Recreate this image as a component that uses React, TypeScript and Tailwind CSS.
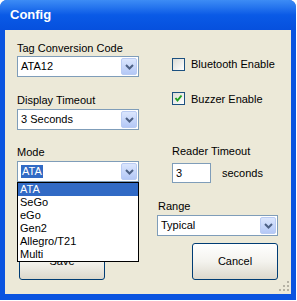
import React from "react";

const font = { fontFamily: '"Liberation Sans", Arial, sans-serif' };

function DropButton() {
  return (
    <div className="flex h-full w-[16px] items-center justify-center rounded-[2px] border border-[#b9cbf3] bg-gradient-to-b from-[#dbe6fd] to-[#b4c8f6]">
      <svg width="9" height="6" viewBox="0 0 9 6">
        <polyline points="1,1 4.5,4.5 8,1" fill="none" stroke="#4d6185" strokeWidth="2" />
      </svg>
    </div>
  );
}

function Combo({ value, selected }: { value: string; selected?: boolean }) {
  return (
    <div className="flex h-[21px] w-full items-stretch border border-[#7f9db9] bg-white p-[1px]">
      <div className="flex flex-1 items-center pl-[2px]">
        <span className={selected ? "bg-[#316ac5] px-[1px] leading-[13px] text-white" : "leading-[13px]"}>{value}</span>
      </div>
      <DropButton />
    </div>
  );
}

function Check({ checked, label }: { checked?: boolean; label: string }) {
  return (
    <div className="flex items-center gap-[6px]">
      <div className="flex h-[13px] w-[13px] items-center justify-center border border-[#1c5180] bg-gradient-to-br from-[#dcdcd6] to-white">
        {checked && (
          <svg width="9" height="9" viewBox="0 0 9 9">
            <polyline points="1.5,4 3.5,6.5 7.5,1.5" fill="none" stroke="#21a121" strokeWidth="2" />
          </svg>
        )}
      </div>
      <span>{label}</span>
    </div>
  );
}

function Button({ label }: { label: string }) {
  return (
    <div className="flex h-[37px] w-[86px] items-center justify-center rounded-[3px] border border-[#003c74] bg-gradient-to-b from-white via-[#f4f3ee] to-[#dcd8cc]">
      {label}
    </div>
  );
}

export default function App() {
  const modes = ["ATA", "SeGo", "eGo", "Gen2", "Allegro/T21", "Multi"];
  return (
    <div className="h-[301px] w-[297px] bg-white" style={font}>
      <div className="flex h-[300px] w-[296px] flex-col overflow-hidden rounded-t-[7px] bg-[#0a54e0]">
        <div className="flex h-[30px] items-center bg-gradient-to-b from-[#3d8cf5] via-[#0a5ae6] to-[#0650de] pl-[10px]">
          <span className="text-[13px] font-bold text-white">Config</span>
        </div>
        <div className="mx-[5px] mb-[6px] flex flex-1 bg-[#ece9d8] text-[11px] text-black">
          <div className="relative ml-[12px] flex w-[122px] flex-col">
            <div className="mt-[12px] leading-[13px]">Tag Conversion Code</div>
            <div className="mt-[1px]">
              <Combo value="ATA12" />
            </div>
            <div className="mt-[17px] leading-[13px]">Display Timeout</div>
            <div className="mt-[2px]">
              <Combo value="3 Seconds" />
            </div>
            <div className="mt-[16px] leading-[13px]">Mode</div>
            <div className="mt-[2px]">
              <Combo value="ATA" selected />
            </div>
            <div className="ml-[2px] mt-[61px]">
              <Button label="Save" />
            </div>
            <div className="absolute left-0 top-[152px] w-[122px] border border-black bg-white">
              {modes.map((m, i) => (
                <div
                  key={m}
                  className={i === 0 ? "h-[13px] bg-[#316ac5] pl-[2px] leading-[13px] text-white" : "h-[13px] pl-[2px] leading-[13px]"}
                >
                  {m}
                </div>
              ))}
            </div>
          </div>
          <div className="ml-[18px] flex w-[121px] flex-col">
            <div className="ml-[15px] mt-[26px]">
              <Check label="Bluetooth Enable" />
            </div>
            <div className="ml-[15px] mt-[18px]">
              <Check checked label="Buzzer Enable" />
            </div>
            <div className="ml-[15px] mt-[38px] leading-[13px]">Reader Timeout</div>
            <div className="ml-[15px] mt-[5px] flex items-center gap-[11px]">
              <div className="flex h-[20px] w-[39px] items-center border border-[#7f9db9] bg-white pl-[3px]">3</div>
              <span>seconds</span>
            </div>
            <div className="ml-[1px] mt-[17px] leading-[13px]">Range</div>
            <div className="mt-[2px]">
              <Combo value="Typical" />
            </div>
            <div className="ml-[35px] mt-[7px]">
              <Button label="Cancel" />
            </div>
          </div>
          <div className="relative flex-1">
            <svg className="absolute bottom-[2px] right-[1px]" width="11" height="11" viewBox="0 0 11 11">
              {[
                [8, 0], [8, 4], [4, 4], [8, 8], [4, 8], [0, 8],
              ].map(([x, y], i) => (
                <rect key={i} x={x} y={y} width="2" height="2" fill="#b5b2a4" />
              ))}
            </svg>
          </div>
        </div>
      </div>
    </div>
  );
}
